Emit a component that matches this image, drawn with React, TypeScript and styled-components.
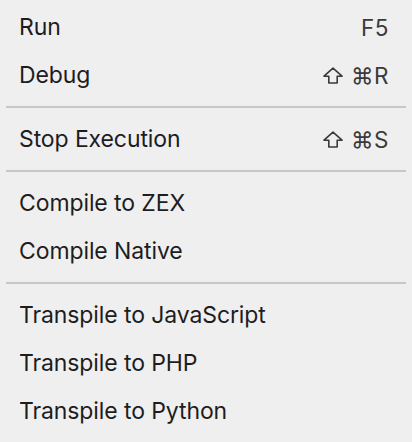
import { createGlobalStyle, styled } from "styled-components";

const GlobalStyle = createGlobalStyle`
  html, body {
    margin: 0;
    padding: 0;
    background: #efeff0;
  }
  body {
    font-family: Inter, "Noto Sans", "Liberation Sans", sans-serif;
    -webkit-font-smoothing: antialiased;
  }
`;

type Item = { label: string; shortcut?: string; shift?: boolean };

const groups: Item[][] = [
  [
    { label: "Run", shortcut: "F5" },
    { label: "Debug", shortcut: "⌘R", shift: true },
  ],
  [{ label: "Stop Execution", shortcut: "⌘S", shift: true }],
  [{ label: "Compile to ZEX" }, { label: "Compile Native" }],
  [
    { label: "Transpile to JavaScript" },
    { label: "Transpile to PHP" },
    { label: "Transpile to Python" },
  ],
];

function ShiftIcon() {
  return (
    <ShiftSvg viewBox="0 0 20 17" width="20" height="17">
      <path
        d="M10 1.2 L19 9.2 H14.2 V16 H5.8 V9.2 H1 Z"
        fill="none"
        stroke="currentColor"
        strokeWidth="1.6"
        strokeLinejoin="round"
      />
    </ShiftSvg>
  );
}

export default function App() {
  return (
    <>
      <GlobalStyle />
      <Menu>
        {groups.map((group, gi) => (
          <Group key={gi}>
            {gi > 0 && <Separator />}
            {group.map((item) => (
              <MenuItem key={item.label}>
                <Label>{item.label}</Label>
                {item.shortcut && (
                  <Shortcut>
                    {item.shift && <ShiftIcon />}
                    <span>{item.shortcut}</span>
                  </Shortcut>
                )}
              </MenuItem>
            ))}
          </Group>
        ))}
      </Menu>
    </>
  );
}

const Menu = styled.div`
  width: 412px;
  height: 442px;
  padding-top: 3px;
  box-sizing: border-box;
  background: #efeff0;
  overflow: hidden;
`;

const Group = styled.div`
  display: flex;
  flex-direction: column;
`;

const Separator = styled.div`
  height: 2px;
  margin: 7px 6px;
  background: #c7c7c9;
`;

const MenuItem = styled.div`
  height: 48px;
  display: flex;
  align-items: center;
  justify-content: space-between;
  padding: 0 23px 0 19px;
  color: #1d1d1f;
`;

const Label = styled.span`
  font-size: 23px;
  letter-spacing: -0.1px;
`;

const Shortcut = styled.span`
  display: flex;
  align-items: center;
  gap: 8px;
  font-size: 22.5px;
  color: #3a3a3c;
  font-family: Inter, "DejaVu Sans", sans-serif;
  letter-spacing: 0.5px;
`;

const ShiftSvg = styled.svg`
  display: block;
  margin-top: 1px;
`;
